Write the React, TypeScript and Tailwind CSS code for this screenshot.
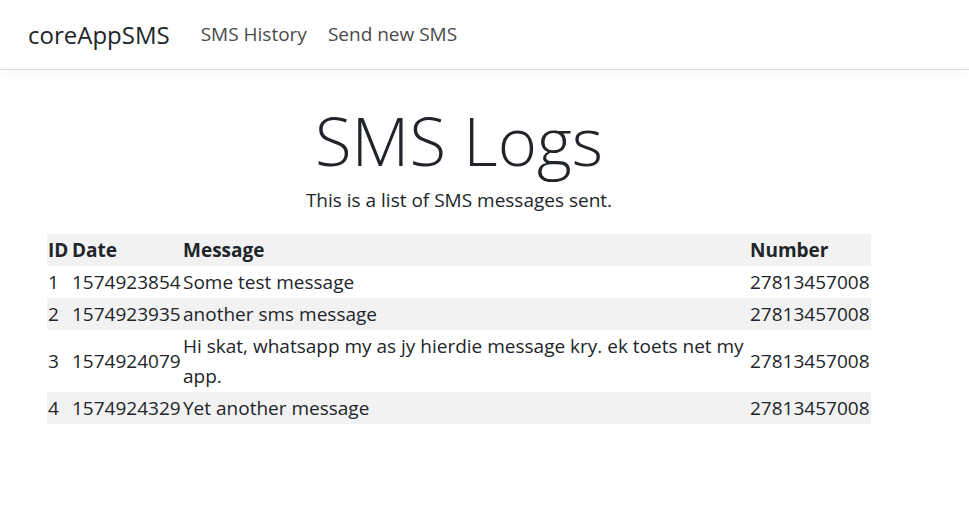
const rows = [
  { id: 1, date: "1574923854", message: "Some test message", number: "27813457008" },
  { id: 2, date: "1574923935", message: "another sms message", number: "27813457008" },
  {
    id: 3,
    date: "1574924079",
    message: "Hi skat, whatsapp my as jy hierdie message kry. ek toets net my app.",
    number: "27813457008",
  },
  { id: 4, date: "1574924329", message: "Yet another message", number: "27813457008" },
];

export default function App() {
  return (
    <div className="min-h-[532px] bg-white font-['Open_Sans',sans-serif] text-[#212529]">
      <nav className="flex h-[70px] items-center border-b border-[#dcdcdc] bg-white px-[28px] shadow-[0_3px_10px_rgba(0,0,0,0.04)]">
        <span className="mr-[31px] text-[24px] text-[#212529]">coreAppSMS</span>
        <ul className="flex gap-[21px] text-[19px] text-[#4a4a4a]">
          <li>SMS History</li>
          <li>Send new SMS</li>
        </ul>
      </nav>

      <main className="ml-[47px] w-[824px] pt-[28px]">
        <div className="text-center">
          <h1 className="text-[67px] font-light leading-[84px]">SMS Logs</h1>
          <p className="mt-[3px] text-[19px] leading-[30px]">This is a list of SMS messages sent.</p>
        </div>

        <table className="mt-[19px] w-[824px] table-fixed border-collapse text-left text-[19px] leading-[30px]">
          <colgroup>
            <col className="w-[24px]" />
            <col className="w-[111px]" />
            <col className="w-[567px]" />
            <col className="w-[122px]" />
          </colgroup>
          <thead>
            <tr className="bg-[#f2f2f2] font-bold">
              <th className="px-px py-px">ID</th>
              <th className="px-px py-px">Date</th>
              <th className="px-px py-px">Message</th>
              <th className="px-px py-px">Number</th>
            </tr>
          </thead>
          <tbody>
            {rows.map((row) => (
              <tr key={row.id} className={row.id % 2 === 0 ? "bg-[#f2f2f2]" : "bg-white"}>
                <td className="px-px py-px align-middle">{row.id}</td>
                <td className="px-px py-px align-middle">{row.date}</td>
                <td className="px-px py-px align-middle">{row.message}</td>
                <td className="px-px py-px align-middle">{row.number}</td>
              </tr>
            ))}
          </tbody>
        </table>
      </main>
    </div>
  );
}
